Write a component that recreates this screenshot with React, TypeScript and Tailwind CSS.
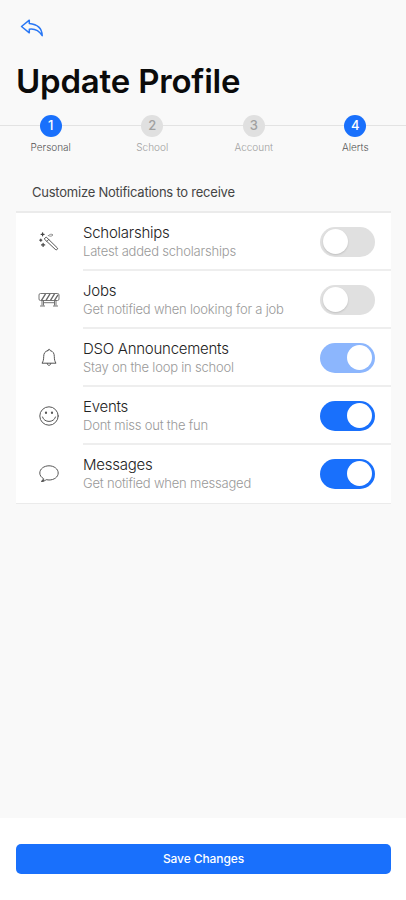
import { ReactNode } from 'react';
import clsx from 'clsx';

interface Step {
  number: number;
  label: string;
  active: boolean;
}

interface NotificationItem {
  title: string;
  description: string;
  icon: ReactNode;
  enabled: boolean;
  disabled?: boolean;
}

const BackIcon = () => (
  <svg viewBox="0 0 24 20" className="h-5 w-6" fill="none" stroke="#2a78f5" strokeWidth="1.5" strokeLinejoin="round">
    <path d="M9.300 2.200 1.500 8.500l7.800 6.300v-3.600c5.200-.7 9.200.6 12.900 6.500-.2-7-4.300-11.300-12.900-12.100Z" />
  </svg>
);

const WandIcon = () => (
  <svg viewBox="0 0 20 20" className="size-5" fill="none" stroke="#444" strokeWidth="0.9" strokeLinecap="round" strokeLinejoin="round">
    <path d="m5.500 6.700 1.700-1.700 11.100 10.900c1 1-.8 2.700-1.800 1.700Z" />
    <path d="m8 9.200 1.700-1.700" />
    <path d="M9.500 3.600c1.500-1.700 3.100-1.800 4.500-.7-1.200 1.500-2.700 1.800-4.500.7Z" stroke="#888" />
    <path d="M3.600.8v3M2.100 2.300h3M1.800 7.200v2M.8 8.200h2M4.100 11.300v3.200M2.500 12.900h3.200" strokeWidth="1.200" />
  </svg>
);

const BarrierIcon = () => (
  <svg viewBox="0 0 22 16" className="h-4 w-[22px]" fill="none" stroke="#666" strokeWidth="0.9" strokeLinejoin="round">
    <rect x="1" y="1.500" width="20" height="7" rx="1.500" />
    <path d="m3.500 8.300 4-6.500M8 8.300l4-6.500M12.500 8.300l4-6.500M16.500 8.300l3.500-5.500" strokeWidth="1.300" />
    <path d="M4 8.500v5M5.500 8.500v5M16.500 8.500v5M18 8.500v5M5.500 10.700h11M2 14h5M15 14h5" />
  </svg>
);

const BellIcon = () => (
  <svg viewBox="0 0 18 20" className="h-5 w-[18px]" fill="none" stroke="#555" strokeWidth="1" strokeLinecap="round" strokeLinejoin="round">
    <path d="M7.800 2.600c0-1.800 2.400-1.800 2.400 0 3 .6 4.100 3 4.100 5.900 0 3.500.6 5 1.700 6.700H2c1.100-1.700 1.700-3.200 1.700-6.700 0-2.900 1.100-5.300 4.100-5.900Z" />
    <path d="M7.200 15.500c.2 2.600 3.400 2.600 3.600 0" />
  </svg>
);

const SmileIcon = () => (
  <svg viewBox="0 0 20 20" className="size-5" fill="none" stroke="#555" strokeWidth="1" strokeLinecap="round">
    <circle cx="10" cy="10" r="9.200" />
    <path d="M3.500 11c1.500 6 11.500 6 13 0" />
    <ellipse cx="7" cy="6.800" rx="1.100" ry="1.200" fill="#555" stroke="none" />
    <ellipse cx="13" cy="6.800" rx="1.100" ry="1.200" fill="#555" stroke="none" />
  </svg>
);

const MessageIcon = () => (
  <svg viewBox="0 0 20 20" className="size-5" fill="none" stroke="#555" strokeWidth="1" strokeLinejoin="round">
    <path d="M4.600 14.700C2.100 13.200.8 11.300.8 9c0-4 4.100-7.200 9.200-7.200s9.200 3.200 9.200 7.200-4.100 7-9.200 7c-1 0-1.900-.1-2.800-.3-1.100.9-2.800 1.800-4.700 1.800 1.100-.8 1.800-1.800 2.100-2.800Z" />
    <path d="M2.500 17.300c1.100-.2 1.900-.9 2.200-1.900" strokeWidth="1.600" />
  </svg>
);

const steps: Array<Step> = [
  { number: 1, label: 'Personal', active: true },
  { number: 2, label: 'School', active: false },
  { number: 3, label: 'Account', active: false },
  { number: 4, label: 'Alerts', active: true },
];

const notifications: Array<NotificationItem> = [
  { title: 'Scholarships', description: 'Latest added scholarships', icon: <WandIcon />, enabled: false },
  { title: 'Jobs', description: 'Get notified when looking for a job', icon: <BarrierIcon />, enabled: false },
  { title: 'DSO Announcements', description: 'Stay on the loop in school', icon: <BellIcon />, enabled: true, disabled: true },
  { title: 'Events', description: 'Dont miss out the fun', icon: <SmileIcon />, enabled: true },
  { title: 'Messages', description: 'Get notified when messaged', icon: <MessageIcon />, enabled: true },
];

const Toggle = ({ label, enabled, disabled }: { label: string; enabled: boolean; disabled?: boolean }) => {
  return (
    <button
      role="switch"
      aria-label={label}
      aria-checked={enabled}
      disabled={disabled}
      className={clsx(
        'mt-px flex h-[30px] w-[55px] shrink-0 items-center rounded-full px-[3px]',
        enabled ? 'justify-end' : 'justify-start bg-[#e0e0e0]',
        enabled && (disabled ? 'bg-[#8cb6fd]' : 'bg-[#1970fc]'),
      )}
    >
      <span className={clsx('size-[25px] rounded-full bg-white', !enabled && 'shadow-[0_1px_2px_rgba(0,0,0,0.15)]')} />
    </button>
  );
};

export default function App() {
  return (
    <div className="flex h-[900px] w-full flex-col overflow-hidden bg-[#f9f9f9] font-['Inter',sans-serif] text-[#222]">
      <header className="px-4 pt-[18px]">
        <button aria-label="Back" className="ml-1 block">
          <BackIcon />
        </button>
        <h1 className="mt-[23px] text-[33px] leading-10 font-semibold tracking-[-0.2px] text-[#0b0b0b]">Update Profile</h1>
      </header>

      <nav className="mt-[13.5px] flex">
        {steps.map((step) => (
          <div key={step.number} className="flex flex-1 flex-col items-center">
            <div className="flex w-full items-center">
              <span className="h-px flex-1 bg-[#e3e3e3]" />
              <span
                className={clsx(
                  'flex size-[22px] items-center justify-center rounded-full text-[13px] font-medium',
                  step.active ? 'bg-[#1970fc] text-white' : 'bg-[#e0e0e0] text-[#a0a0a0]',
                )}
              >
                {step.number}
              </span>
              <span className="h-px flex-1 bg-[#e3e3e3]" />
            </div>
            <span className={clsx('mt-[2.500px] text-[10px] leading-4 font-light', step.active ? 'text-[#555]' : 'text-[#a0a0a0]')}>{step.label}</span>
          </div>
        ))}
      </nav>

      <main className="flex-1 pt-[27px] pr-[15px] pl-4">
        <h2 className="pl-4 text-[13px] leading-5 tracking-[-0.23px] text-[#444]">Customize Notifications to receive</h2>
        <ul className="mt-[9px] border-t-2 border-b border-[#ebebeb] bg-white">
          {notifications.map((item, index) => (
            <li key={item.title} className="flex h-[58px]">
              <div className="flex w-[67px] shrink-0 items-center justify-center pr-0.5 pb-px">{item.icon}</div>
              <div
                className={clsx(
                  'flex flex-1 items-center justify-between pr-4',
                  index !== notifications.length - 1 ? 'border-b-2 border-[#eeeeee]' : 'pb-0.5',
                )}
              >
                <div className="flex flex-col pt-px">
                  <span className="text-[15px] leading-[19px] font-light tracking-[-0.25px] text-[#222]">{item.title}</span>
                  <span className="text-[13px] leading-[18px] font-light tracking-[-0.2px] text-[#999]">{item.description}</span>
                </div>
                <Toggle label={item.title} enabled={item.enabled} disabled={item.disabled} />
              </div>
            </li>
          ))}
        </ul>
      </main>

      <footer className="h-[82px] bg-white pt-[26px] pr-[15px] pl-4">
        <button className="h-[30px] w-full rounded-[5px] bg-[#1970fc] text-xs font-medium tracking-[-0.1px] text-white">Save Changes</button>
      </footer>
    </div>
  );
}
